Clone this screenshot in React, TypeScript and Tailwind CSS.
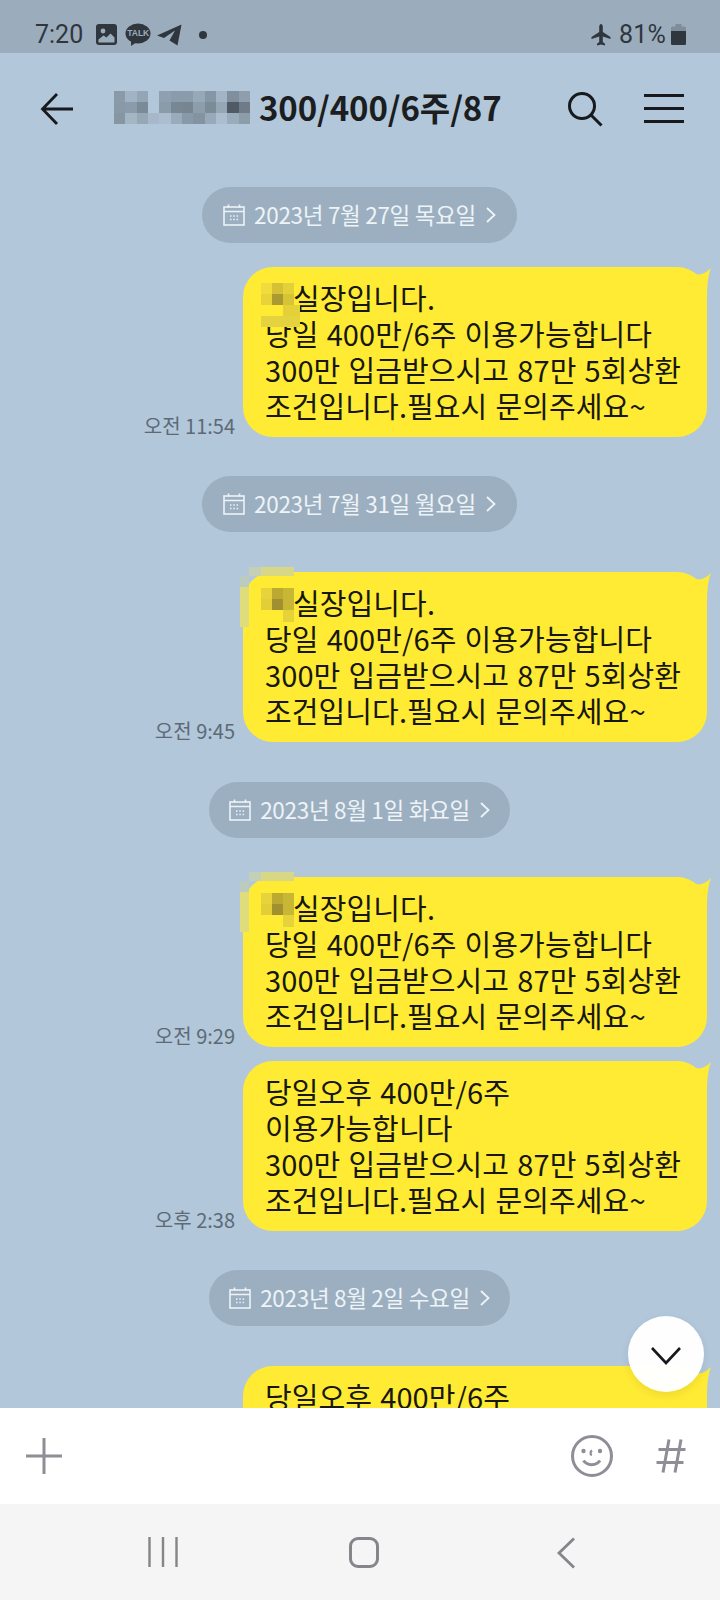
const bubbleFont = "font-['Noto_Sans_CJK_KR','Noto_Sans',sans-serif]";

type Cell = [number, number, number, number, string];

// censored name in the title: 12 x 3 blocks
const titleMosaic = [
  ["#8a9aa8", "#a1b3c4", "#94a6b6", "", "#8fa1b1", "#8a9cab", "#8a9cab", "#97a9b9", "#8596a5", "#a2b4c5", "#7f8f9d", "#8e9eac"],
  ["#8999a6", "#8b9bab", "#7b8a97", "", "#8a9ba9", "#788794", "#778591", "#8d9dac", "#7c8b98", "#95a6b5", "#4f5a65", "#6f7c88"],
  ["#8796a3", "#a4b5c4", "#96a7b6", "#a6b8c9", "#abbdce", "#9aacbc", "#8899a8", "#84939f", "#98a9b9", "#abbdce", "#9aabbb", "#8c9ca9"],
];

const mosaicA: Cell[] = [
  [0, 0, 11, 11, "#f0dc3a"],
  [11, 0, 11, 11, "#d4c135"],
  [22, 0, 11, 11, "#e4d138"],
  [0, 11, 11, 11, "#e8d438"],
  [11, 11, 11, 11, "#ab9a30"],
  [22, 11, 11, 11, "#d6c336"],
  [22, 22, 17, 11, "#e4d138"],
  [0, 33, 39, 11, "#e4d23e"],
];

const mosaicB: Cell[] = [
  [-12, -21, 12, 9, "#c3cfb6"],
  [0, -21, 33, 9, "#d8d785"],
  [-21, -12, 9, 11, "#bccbc0"],
  [-21, -1, 9, 40, "#dedc7c"],
  [0, 0, 11, 11, "#e8d43a"],
  [11, 0, 11, 11, "#bcaa30"],
  [22, 0, 11, 11, "#c8b635"],
  [0, 11, 11, 11, "#e2cf38"],
  [11, 11, 11, 11, "#a09030"],
  [22, 11, 11, 11, "#c8b635"],
  [22, 22, 11, 12, "#e6d33a"],
];

function Mosaic({ cells }: { cells: Cell[] }) {
  return (
    <svg className="absolute left-[18px] top-[16px] overflow-visible" width="44" height="50" viewBox="0 0 44 50">
      {cells.map(([x, y, w, h, fill], i) => (
        <rect key={i} x={x} y={y} width={w} height={h} fill={fill} />
      ))}
    </svg>
  );
}

function DatePill({ label, wide }: { label: string; wide?: boolean }) {
  return (
    <div className="flex justify-center pr-[1px]">
      <div className={`flex h-[56px] items-center justify-center rounded-full bg-[#9bafc0] text-[#eef3f7] ${wide ? "w-[315px]" : "w-[301px]"}`}>
        <svg width="24" height="24" viewBox="0 0 24 24" fill="none" stroke="#eef3f7" strokeWidth="1.6" className="mr-[8px]">
          <rect x="2" y="4" width="20" height="18" />
          <path d="M2 8.5h20M6.5 1.5v3M17.5 1.5v3" />
          <path d="M8 13h1.5M11.3 13h1.5M14.6 13h1.5M8 16.5h1.5M11.3 16.5h1.5M14.6 16.5h1.5" strokeWidth="1.5" />
        </svg>
        <span className={`${bubbleFont} text-[22.5px] tracking-[-0.3px]`}>{label}</span>
        <svg width="12" height="18" viewBox="0 0 12 18" fill="none" stroke="#eef3f7" strokeWidth="1.8" className="ml-[9px]">
          <path d="M2 2l7.5 7L2 16" />
        </svg>
      </div>
    </div>
  );
}

function Bubble({ time, lines, mosaic }: { time: string; lines: string[]; mosaic?: Cell[] }) {
  return (
    <div className="flex items-end justify-end gap-[8px] pr-[13px]">
      <span className={`${bubbleFont} text-[20px] leading-[22px] text-[#5d6a76]`}>{time}</span>
      <div className="relative h-[170px] w-[464px] rounded-[30px] bg-[#ffeb33] pl-[22px] pt-[12px]">
        <svg className="absolute left-[450px] top-0" width="20" height="30" viewBox="0 0 20 30">
          <path d="M3 7Q10 9 18 1Q14 10 14 30L0 30Z" fill="#ffeb33" />
        </svg>
        {lines.map((t, i) => (
          <div key={t} className={`${bubbleFont} relative whitespace-pre text-[29px] leading-[36px] tracking-[0.1px] [word-spacing:1.5px] text-[#17170e] ${mosaic && i === 0 ? "pl-[28px]" : ""}`}>{t}</div>
        ))}
        {mosaic && <Mosaic cells={mosaic} />}
      </div>
    </div>
  );
}

const offer = ["실장입니다.", "당일 400만/6주 이용가능합니다", "300만 입금받으시고 87만 5회상환", "조건입니다.필요시 문의주세요~"];
const offerPm = ["당일오후 400만/6주", "이용가능합니다", "300만 입금받으시고 87만 5회상환", "조건입니다.필요시 문의주세요~"];

export default function App() {
  return (
    <div className="flex h-[1600px] w-[720px] flex-col overflow-hidden bg-[#b2c7da]">
      {/* status bar */}
      <div className="flex h-[53px] shrink-0 items-center bg-[#9badbc] pl-[35px] pr-[34px] pt-[16px] text-[#2f363d]">
        <span className="font-['Roboto',sans-serif] text-[25px] leading-none">7:20</span>
        <svg width="21" height="21" viewBox="0 0 21 21" className="ml-[13px]">
          <rect width="21" height="21" rx="3" fill="#2f363d" />
          <circle cx="7" cy="7" r="2.400" fill="#9badbc" />
          <path d="M2.500 18.500v-3l5-4 3 2 4-4 4 4v5z" fill="#9badbc" />
        </svg>
        <div className="relative ml-[8px] h-[24px] w-[26px]">
          <svg width="26" height="24" viewBox="0 0 26 24" className="absolute inset-0">
            <ellipse cx="13" cy="10.500" rx="12.500" ry="10" fill="#2f363d" />
            <path d="M6 17l0 6 6-4z" fill="#2f363d" />
          </svg>
          <span className="absolute inset-x-0 top-[6px] text-center font-['Liberation_Sans',sans-serif] text-[8.500px] font-bold leading-[9px] text-[#9badbc]">TALK</span>
        </div>
        <svg width="25" height="22" viewBox="0 0 25 22" className="ml-[6px]">
          <path d="M0 11.500L24.500 0.500 20.500 21.500 12.500 16.500 18 6.500 7 14z" fill="#2f363d" />
        </svg>
        <span className="ml-[17px] h-[8px] w-[8px] rounded-full bg-[#2f363d]" />
        <div className="flex-1" />
        <svg width="24" height="24" viewBox="0 0 24 24" fill="#2f363d" className="mr-[6px]">
          <path d="M21.500 16v-2L13.800 9V3.500C13.800 2.500 13 1 12 1s-1.800 1.500-1.800 2.500V9L2.500 14v2l7.700-2.500V19L8 20.700V22.500l4-1.100 4 1.100v-1.800L13.800 19v-5.500z" />
        </svg>
        <span className="font-['Roboto',sans-serif] text-[25px] leading-none tracking-[0.2px]">81%</span>
        <svg width="15" height="21" viewBox="0 0 15 21" className="ml-[5px]">
          <path d="M4.500 0h6v2.500h3a1.500 1.500 0 0 1 1.500 1.500v15.500a1.500 1.500 0 0 1-1.500 1.500h-12a1.500 1.500 0 0 1-1.500-1.500V4a1.500 1.500 0 0 1 1.500-1.500h3z" fill="#7f8c99" />
          <path d="M0 7h15v12.500a1.500 1.500 0 0 1-1.500 1.500h-12a1.500 1.500 0 0 1-1.500-1.500z" fill="#2f363d" />
        </svg>
      </div>

      {/* title row */}
      <div className="flex h-[107px] shrink-0 items-center pl-[40px] pr-[36px] pt-[4px]">
        <svg width="33" height="34" viewBox="0 0 33 34" fill="none" stroke="#17191c" strokeWidth="2.800">
          <path d="M17 2L2.500 17 17 32M2.500 17H33" />
        </svg>
        <div className="ml-[41px] mt-[-2px] grid grid-cols-[repeat(12,11.330px)] grid-rows-[repeat(3,11px)]">
          {titleMosaic.flat().map((c, i) => (
            <div key={i} style={{ backgroundColor: c || "transparent" }} />
          ))}
        </div>
        <span className={`${bubbleFont} ml-[9px] mt-[-2px] text-[33px] font-bold leading-none text-[#1b1d20] tracking-[-0.1px]`}>300/400/6주/87</span>
        <div className="flex-1" />
        <svg width="36" height="36" viewBox="0 0 36 36" fill="none" stroke="#17191c" strokeWidth="3" className="mr-[41px]">
          <circle cx="15" cy="15" r="12.500" />
          <path d="M24 24l10.500 10.500" />
        </svg>
        <div className="flex w-[40px] flex-col gap-[10px]">
          <div className="h-[3px] bg-[#17191c]" />
          <div className="h-[3px] bg-[#17191c]" />
          <div className="h-[3px] bg-[#17191c]" />
        </div>
      </div>

      {/* messages */}
      <div className="relative min-h-0 flex-1 overflow-hidden pt-[27px]">
        <DatePill label="2023년 7월 27일 목요일" wide />
        <div className="mt-[24px]"><Bubble time="오전 11:54" lines={offer} mosaic={mosaicA} /></div>
        <div className="mt-[39px]"><DatePill label="2023년 7월 31일 월요일" wide /></div>
        <div className="mt-[40px]"><Bubble time="오전 9:45" lines={offer} mosaic={mosaicB} /></div>
        <div className="mt-[40px]"><DatePill label="2023년 8월 1일 화요일" /></div>
        <div className="mt-[39px]"><Bubble time="오전 9:29" lines={offer} mosaic={mosaicB} /></div>
        <div className="mt-[14px]"><Bubble time="오후 2:38" lines={offerPm} /></div>
        <div className="mt-[39px]"><DatePill label="2023년 8월 2일 수요일" /></div>
        <div className="mt-[40px]"><Bubble time="" lines={offerPm} /></div>

        <div className="absolute bottom-[16px] right-[16px] flex h-[76px] w-[76px] items-center justify-center rounded-full bg-white/[0.98] shadow-[0_3px_8px_rgba(0,0,0,0.08)]">
          <svg width="32" height="20" viewBox="0 0 32 20" fill="none" stroke="#17191c" strokeWidth="2.600" className="mt-[3px]">
            <path d="M2 2l14 15L30 2" />
          </svg>
        </div>
      </div>

      {/* input */}
      <div className="flex h-[96px] shrink-0 items-center bg-white pl-[26px] pr-[34px]">
        <svg width="36" height="36" viewBox="0 0 36 36" stroke="#8d8e96" strokeWidth="3">
          <path d="M18 0v36M0 18h36" />
        </svg>
        <div className="flex-1" />
        <svg width="42" height="42" viewBox="0 0 42 42" fill="none" stroke="#8d8e96" strokeWidth="3" className="mr-[43px]">
          <circle cx="21" cy="21" r="19.500" />
          <circle cx="12.500" cy="16" r="2.200" fill="#8d8e96" stroke="none" />
          <circle cx="29" cy="16" r="2.200" fill="#8d8e96" stroke="none" />
          <path d="M21 15.500c-2 1.500-2 4 0 4.500" strokeWidth="2.200" />
          <path d="M12.500 25.500c3.500 5.500 13 5.500 16.500 0" />
        </svg>
        <svg width="30" height="34" viewBox="0 0 30 34" fill="none" stroke="#8d8e96" strokeWidth="3">
          <path d="M13 0.500L7 33.500M25 0.500L19 33.500M2.500 10.500H29.500M0.500 23.500H27.500" />
        </svg>
      </div>

      {/* android nav */}
      <div className="flex h-[96px] shrink-0 items-start bg-[#f5f5f5] pl-[148px] pt-[33px]">
        <svg width="30" height="30" viewBox="0 0 30 30" stroke="#85858a" strokeWidth="2.400">
          <path d="M1.500 0v30M15 0v30M28.500 0v30" />
        </svg>
        <div className="ml-[171px] h-[31px] w-[30px] rounded-[9px] border-[3px] border-[#85858a]" />
        <svg width="20" height="32" viewBox="0 0 20 32" fill="none" stroke="#85858a" strokeWidth="2.800" className="ml-[177px]">
          <path d="M18 1.500L3 16l15 14.500" />
        </svg>
      </div>
    </div>
  );
}
